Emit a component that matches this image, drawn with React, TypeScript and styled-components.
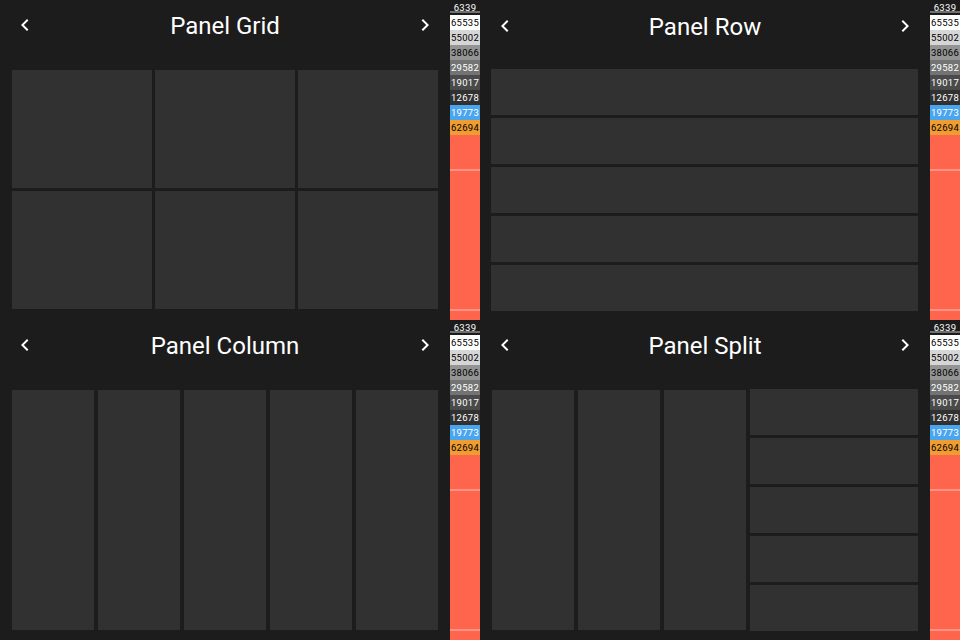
import React from 'react';
import styled, { createGlobalStyle } from 'styled-components';

const GlobalStyle = createGlobalStyle`
  * { box-sizing: border-box; }
  body { margin: 0; background: #1c1c1c; font-family: Roboto, sans-serif; }
`;

const Board = styled.main`
  display: grid;
  grid-template: repeat(2, 320px) / repeat(2, 480px);
  width: 960px;
  height: 640px;
  overflow: hidden;
`;

const Screen = styled.section`
  display: grid;
  grid-template-columns: 450px 30px;
  height: 320px;
  background: #1c1c1c;
`;

const Content = styled.div`
  display: flex;
  flex-direction: column;
`;

const Header = styled.header<{ $drop: number }>`
  display: flex;
  align-items: center;
  justify-content: space-between;
  flex: none;
  height: 50px;
  margin-top: ${(p) => p.$drop}px;
  padding: 0 13px;
`;

const Title = styled.h1`
  margin: 0;
  padding-top: 2px;
  color: #fff;
  font-size: 24px;
  font-weight: 400;
  line-height: 28px;
  letter-spacing: 0;
`;

const NavButton = styled.button`
  display: flex;
  width: 24px;
  height: 24px;
  padding: 0;
  border: 0;
  background: none;
  color: #fff;
`;

const PanelArea = styled.div<{ $margin: string; $columns: string; $rows: string; $gap: string }>`
  display: grid;
  margin: ${(p) => p.$margin};
  grid-template-columns: ${(p) => p.$columns};
  grid-template-rows: ${(p) => p.$rows};
  gap: ${(p) => p.$gap};
`;

const Panel = styled.div`
  background: #313131;
`;

const SplitArea = styled.div`
  display: flex;
  align-items: flex-start;
  gap: 4px;
  margin: 19px 0 0 12px;
`;

const Meter = styled.aside`
  display: flex;
  flex-direction: column;
  height: 320px;
  background: #ff644d;
`;

const Value = styled.div<{ $bg: string; $fg: string }>`
  flex: none;
  height: 15px;
  background: ${(p) => p.$bg};
  color: ${(p) => p.$fg};
  font-size: 9.5px;
  line-height: 16px;
  text-align: center;
  letter-spacing: 0.3px;
`;

const PeakValue = styled(Value)`
  background: linear-gradient(#707070, #707070) 0 11px / 100% 2px no-repeat ${(p) => p.$bg};
`;

const Tick = styled.div<{ $space: number }>`
  flex: none;
  height: 2px;
  margin-top: ${(p) => p.$space}px;
  background: #ff9486;
`;

const values = [
  { text: '65535', bg: '#ffffff', fg: '#000' },
  { text: '55002', bg: '#d6d6d6', fg: '#000' },
  { text: '38066', bg: '#949494', fg: '#000' },
  { text: '29582', bg: '#737373', fg: '#fff' },
  { text: '19017', bg: '#4a4a4a', fg: '#fff' },
  { text: '12678', bg: '#313131', fg: '#fff' },
  { text: '19773', bg: '#4aa5ef', fg: '#fff' },
  { text: '62694', bg: '#ef9d31', fg: '#000' },
];

function Chevron({ d }: { d: string }) {
  return (
    <svg width="24" height="24" viewBox="0 0 24 24" fill="currentColor">
      <path d={d} />
    </svg>
  );
}

function Cells({ count }: { count: number }) {
  return <>{Array.from({ length: count }, (_, i) => <Panel key={i} />)}</>;
}

function DemoScreen({ title, drop = 0, children }: { title: string; drop?: number; children: React.ReactNode }) {
  return (
    <Screen>
      <Content>
        <Header $drop={drop}>
          <NavButton aria-label="Previous">
            <Chevron d="M15.41 7.41 14 6l-6 6 6 6 1.41-1.41L10.83 12z" />
          </NavButton>
          <Title>{title}</Title>
          <NavButton aria-label="Next">
            <Chevron d="M10 6 8.59 7.41 13.17 12l-4.58 4.59L10 18l6-6z" />
          </NavButton>
        </Header>
        {children}
      </Content>
      <Meter>
        <PeakValue $bg="#1c1c1c" $fg="#fff">6339</PeakValue>
        {values.map((v) => (
          <Value key={v.text} $bg={v.bg} $fg={v.fg}>{v.text}</Value>
        ))}
        <Tick $space={34} />
        <Tick $space={138} />
      </Meter>
    </Screen>
  );
}

export default function App() {
  return (
    <>
      <GlobalStyle />
      <Board>
        <DemoScreen title="Panel Grid">
          <PanelArea $margin="20px 0 0 12px" $columns="repeat(3, 140px)" $rows="repeat(2, 118px)" $gap="3px">
            <Cells count={6} />
          </PanelArea>
        </DemoScreen>
        <DemoScreen title="Panel Row" drop={1}>
          <PanelArea $margin="18px 0 0 11px" $columns="427px" $rows="repeat(5, 46px)" $gap="3px">
            <Cells count={5} />
          </PanelArea>
        </DemoScreen>
        <DemoScreen title="Panel Column">
          <PanelArea $margin="20px 0 0 12px" $columns="repeat(5, 82px)" $rows="240px" $gap="4px">
            <Cells count={5} />
          </PanelArea>
        </DemoScreen>
        <DemoScreen title="Panel Split">
          <SplitArea>
            <PanelArea $margin="1px 0 0" $columns="repeat(3, 82px)" $rows="240px" $gap="4px">
              <Cells count={3} />
            </PanelArea>
            <PanelArea $margin="0" $columns="168px" $rows="repeat(5, 46px)" $gap="3px">
              <Cells count={5} />
            </PanelArea>
          </SplitArea>
        </DemoScreen>
      </Board>
    </>
  );
}
